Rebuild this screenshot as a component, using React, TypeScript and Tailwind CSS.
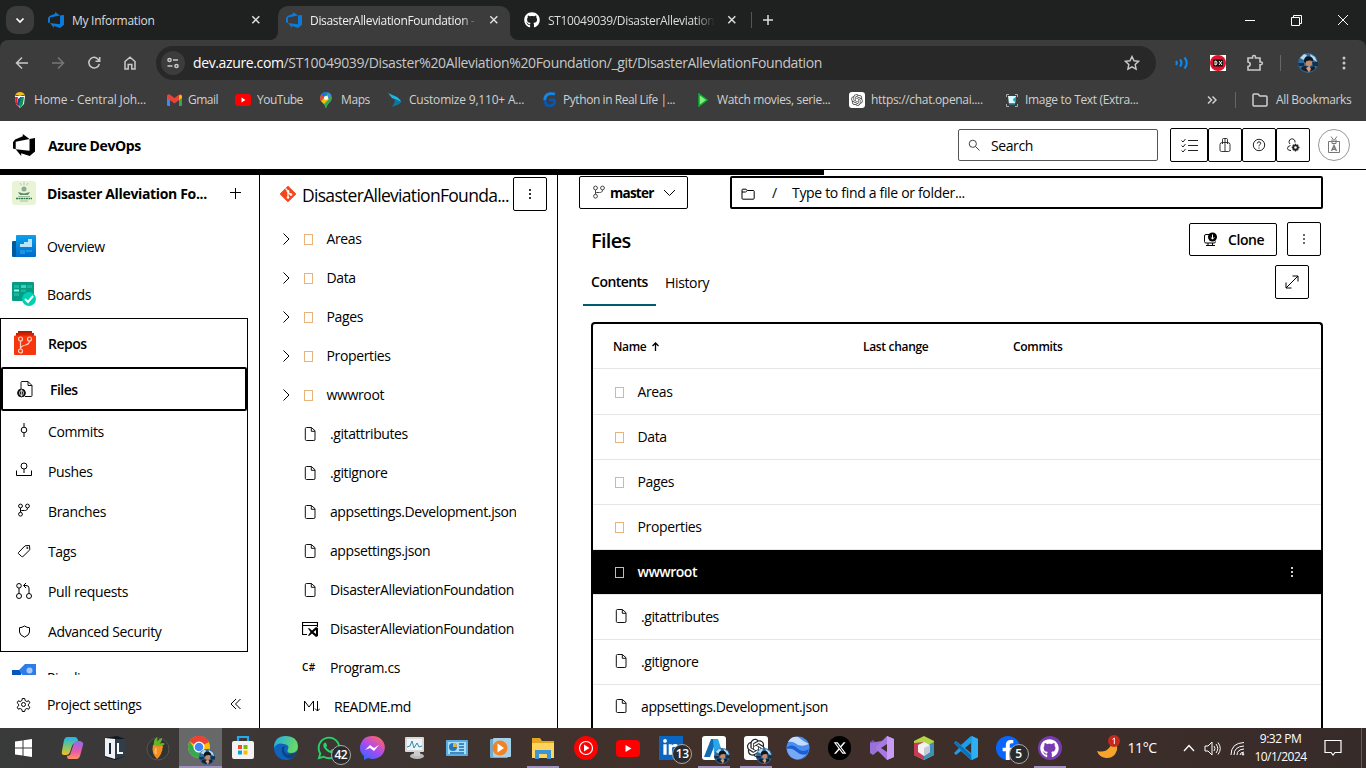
import React from 'react';
import { FaGithub, FaWhatsapp, FaFacebookF, FaLinkedinIn } from 'react-icons/fa';
import { FaXTwitter } from 'react-icons/fa6';
import { RiOpenaiFill } from 'react-icons/ri';

type Kids = { children?: React.ReactNode };

function Ico({ s = 16, vb, c = '', sw = 1, children }: Kids & { s?: number; vb?: number; c?: string; sw?: number }) {
  const v = vb ?? s;
  return (
    <svg width={s} height={s} viewBox={`0 0 ${v} ${v}`} fill="none" stroke="currentColor" strokeWidth={sw} className={`shrink-0 ${c}`}>
      {children}
    </svg>
  );
}

/* ---------- shared glyphs ---------- */
const DevOpsLogo = ({ className = '' }: { className?: string }) => (
  <svg viewBox="0 0 24 24" fill="currentColor" className={`shrink-0 ${className}`}>
    <path d="M0 8.877L2.247 5.910l8.405-3.416V.022l7.370 5.393L2.966 8.338v8.225L0 15.707zm24-4.450v14.651l-5.753 4.900-9.303-3.057v3.056l-5.978-7.416 15.057 1.798V5.415z" />
  </svg>
);
const CloseX = () => (
  <Ico s={10} sw={1.5} c="text-[#dedede]"><path d="M1.300 1.300l7 7M8.300 1.300l-7 7" /></Ico>
);
const DotsV = ({ c = '' }: { c?: string }) => (
  <Ico s={14} c={c}><g fill="currentColor" stroke="none"><rect x="6.200" y="2" width="1.600" height="2" /><rect x="6.200" y="6" width="1.600" height="2" /><rect x="6.200" y="10" width="1.600" height="2" /></g></Ico>
);
const FileGlyph = ({ c = '' }: { c?: string }) => (
  <svg width="12" height="14" viewBox="0 0 12 14" fill="none" stroke="#111" className={`shrink-0 ${c}`}>
    <path d="M2.500 .5h4.800L11 3.700v8.300a1.200 1.200 0 0 1-1.200 1.500H2.500A1.200 1.200 0 0 1 1.300 12.300V1.700A1.200 1.200 0 0 1 2.500 .5z" /><path d="M7.300 .5V4.300h3.700" />
  </svg>
);
const Branch = ({ c = '' }: { c?: string }) => (
  <Ico s={14} c={c}><circle cx="3.500" cy="3" r="1.900" /><circle cx="10.500" cy="3" r="1.900" /><circle cx="3.500" cy="11.200" r="1.900" /><path d="M3.500 5v4.200M10.500 5c0 2-1.200 2.500-3 2.500H5c-1 0-1.500.6-1.500 1.500" /></Ico>
);
const Avatar = ({ c = 'w-5 h-5' }: { c?: string }) => (
  <svg viewBox="0 0 20 20" className={`shrink-0 ${c}`}>
    <circle cx="10" cy="10" r="10" fill="#2f6a9c" />
    <path d="M2 5l4-4 3 1-3 5zM12 1l5 3 2 5-6-4z" fill="#b5dbf0" />
    <path d="M0 10h6v3H1zM14 9h6v4h-5z" fill="#173049" />
    <path d="M3 16c0-2 2-3 4-3l5 1 4-1q1 1 1 3a10 10 0 0 1-14 0z" fill="#1a1f2a" />
    <circle cx="10.800" cy="10" r="3.300" fill="#c38a69" />
    <path d="M6 8.500c0-4 2-5 4.500-5s5 1 4.500 4.500l-3-.6-3.500.6-1 2z" fill="#111419" />
    <path d="M8 15l3.500-2 1.500 3-2 3.500z" fill="#d79c7a" />
  </svg>
);

/* ---------- browser chrome ---------- */
function Tabs() {
  return (
    <div className="flex h-10 bg-[#1f2120] text-xs text-[#dcdcdc]">
      <div className="flex w-[278px] items-center pl-1.5">
        <div className="flex h-7 w-7 items-center justify-center rounded-[10px] bg-[#3c3c3c]">
          <Ico s={10} sw={1.700} c="text-white"><path d="M1.500 3.500L5 7l3.500-3.500" /></Ico>
        </div>
        <DevOpsLogo className="ml-[14px] h-4 w-4 text-[#0a7bdc]" />
        <span className="mt-px ml-2 w-[179px] tracking-[-0.28px]">My Information</span>
        <CloseX />
      </div>
      <div className="flex items-end">
        <Corner />
      </div>
      <div className="mt-1.5 flex h-[34px] w-[232px] items-center rounded-t-[10px] bg-[#3c3c3c] pb-1.5 pl-2">
        <DevOpsLogo className="h-4 w-4 text-[#0a7bdc]" />
        <span className="mt-px ml-2 w-[168px] shrink-0 overflow-hidden whitespace-nowrap tracking-[-0.33px] text-[#f0f0f0] [mask-image:linear-gradient(to_right,black_90%,transparent)]">DisasterAlleviationFoundation -</span>
        <span className="ml-[11px]"><CloseX /></span>
      </div>
      <div className="flex items-end">
        <CornerR />
      </div>
      <div className="flex items-center">
        <FaGithub className="ml-[14px] h-4 w-4 text-white" />
        <span className="mt-px ml-2 w-[167px] overflow-hidden whitespace-nowrap tracking-[-0.33px] [mask-image:linear-gradient(to_right,black_88%,transparent)]">ST10049039/DisasterAlleviation</span>
        <span className="ml-3"><CloseX /></span>
        <div className="ml-[14px] h-4 w-px bg-[#555]" />
        <Ico s={12} sw={1.500} c="ml-[10px]"><path d="M6 1v10M1 6h10" /></Ico>
      </div>
      <div className="ml-auto flex items-center text-white">
        <Ico s={10}><path d="M0 5.500h10" /></Ico>
        <Ico s={11} c="ml-9"><path d="M.5 2.500h8v8h-8zM2.500 2.500v-2h8v8h-2" /></Ico>
        <Ico s={12} c="mr-[17px] ml-[35px]"><path d="M1 1l10 10M11 1L1 11" /></Ico>
      </div>
    </div>
  );
}
const Corner = () => <svg width="8" height="8" viewBox="0 0 8 8" className="-ml-2"><path d="M8 0v8H0a8 8 0 0 0 8-8z" fill="#3c3c3c" /></svg>;
const CornerR = () => <svg width="8" height="8" viewBox="0 0 8 8" className="-mr-2"><path d="M0 0v8h8a8 8 0 0 1-8-8z" fill="#3c3c3c" /></svg>;

function Toolbar() {
  return (
    <div className="flex h-[46px] items-center rounded-t-[8px] bg-[#3c3c3c] text-[#c9c9c9]">
      <Ico s={14} sw={1.500} c="ml-[15px]"><path d="M13 7H2M7 1.500L1.500 7 7 12.500" /></Ico>
      <Ico s={14} sw={1.500} c="ml-[22px] text-[#777]"><path d="M1 7h11M7 1.500L12.500 7 7 12.500" /></Ico>
      <Ico s={14} sw={1.500} c="ml-[22px]"><path d="M12 4.500A5.300 5.300 0 1 0 12.300 8M12.700 1v4.200H8.500" /></Ico>
      <Ico s={14} sw={1.500} c="ml-[22px]"><path d="M2 5.500L7 1.300l5 4.200V13H8.800V8.500H5.200V13H2z" /></Ico>
      <div className="ml-[19px] flex h-[34px] w-[1000px] items-center rounded-full bg-[#282828] pl-[5px]">
        <div className="flex h-6 w-6 items-center justify-center rounded-full bg-[#3c3c3c]">
          <Ico s={14} sw={1.500}><circle cx="3.500" cy="4" r="1.600" /><path d="M7 4h5M1.500 10h5" /><circle cx="10.500" cy="10" r="1.600" /></Ico>
        </div>
        <span className="ml-2 text-sm tracking-[-0.37px] text-[#c7c7c7]"><span className="text-white">dev.azure.com</span>/ST10049039/Disaster%20Alleviation%20Foundation/_git/DisasterAlleviationFoundation</span>
        <Ico s={16} sw={1.400} c="mr-4 ml-auto"><path d="M8 1.500l2 4.300 4.600.5-3.400 3.200.9 4.700L8 11.800l-4.100 2.400.9-4.700L1.400 6.300 6 5.800z" /></Ico>
      </div>
      <Ico s={16} sw={2} c="ml-[18px] text-[#0a8bf5]"><path d="M2 6q1.500 2 0 4M6 4.500q3 3.500 0 7M10.500 2.500q4.500 5.500 0 11" /></Ico>
      <svg width="16" height="16" viewBox="0 0 16 16" className="ml-5"><rect width="16" height="16" fill="#fff" /><circle cx="8" cy="8" r="8" fill="#e0132b" /><rect x="3" y="4.500" width="10" height="7" rx="1" fill="#111" /><path d="M5 6v4q2 0 2-2t-2-2M9 6l3 4M12 6L9 10" stroke="#fff" fill="none" /></svg>
      <Ico s={18} sw={1.600} c="ml-[20px]"><path d="M2 4h4.500V3a1.500 1.500 0 0 1 3 0v1H14v4h1a1.300 1.300 0 0 1 0 2.700h-1V16H2v-3.500c2.500 0 3.200-4 0-4.500z" /></Ico>
      <div className="ml-[16px] h-4 w-px bg-[#666]" />
      <Avatar c="ml-[17px] w-5 h-5" />
      <Ico s={16} c="ml-[18px]"><g fill="currentColor" stroke="none"><circle cx="8" cy="3" r="1.500" /><circle cx="8" cy="8" r="1.500" /><circle cx="8" cy="13" r="1.500" /></g></Ico>
    </div>
  );
}

function Bookmark({ w, g, icon, children }: Kids & { w: string; g: string; icon: React.ReactNode }) {
  return <div className={`flex shrink-0 items-center whitespace-nowrap ${w}`}><span className={`flex shrink-0 ${g}`}>{icon}</span>{children}</div>;
}

function Bookmarks() {
  return (
    <div className="flex h-[35px] items-center bg-[#3c3c3c] pb-[7px] pl-3 text-xs tracking-[-0.2px] text-[#d0d0d0]">
      <Bookmark w="w-[155px]" g="w-[22px]" icon={<svg width="15" height="16" viewBox="0 0 15 16"><path d="M3 4h10l-1 8-4 4-4-4z" fill="#fff" /><path d="M3 5l3 0-1 6 3 5-4-4z" fill="#e21b2d" /><path d="M8 5h4l-1 7-3 4-1-3z" fill="#08955a" /><path d="M6 7l3-2-2 9-2-2z" fill="#16498a" /><path d="M3 4q1-4 5-4t5 4l-2-1-3 1-3-1z" fill="#f5bd18" /></svg>}><span className="tracking-[-0.14px]">Home - Central Joh...</span></Bookmark>
      <Bookmark w="w-[68px]" g="w-[21px]" icon={<svg width="15" height="12" viewBox="0 0 15 12"><path d="M0 1.500h3V12H1.200Q0 12 0 11z" fill="#4285f4" /><path d="M12 1.500h3V11q0 1-1 1h-2z" fill="#34a853" /><path d="M0 2q1-3 3.500-1l4 3 4-3Q14-1 15 2v2l-7.500 5.500L0 4z" fill="#ea4335" /><path d="M12 1.500q3-1.500 3 1V4l-3 2z" fill="#fbbc04" /></svg>}><span className="tracking-[-0.5px]">Gmail</span></Bookmark>
      <Bookmark w="w-[85px]" g="w-[22px]" icon={<svg width="16" height="12" viewBox="0 0 16 12"><rect width="16" height="12" rx="3" fill="#f00" /><path d="M6.500 3.500v5L10.500 6z" fill="#fff" /></svg>}><span className="tracking-[-0.5px]">YouTube</span></Bookmark>
      <Bookmark w="w-[68px]" g="w-[21px]" icon={<svg width="12" height="16" viewBox="0 0 12 16"><path d="M6 0a6 6 0 0 1 6 6c0 4-5 5.500-5.500 10h-1C5 11.500 0 10 0 6a6 6 0 0 1 6-6z" fill="#34a853" /><path d="M1 3A6 6 0 0 1 8 .4L3.500 5.500z" fill="#1a73e8" /><path d="M1.200 2.700L4 5 .8 9Q-.8 6 1.200 2.700z" fill="#ea4335" /><path d="M1 9l7-6 1 4-5 5z" fill="#fbbc04" /><path d="M8 .4A6 6 0 0 1 11.400 3L8 7z" fill="#4285f4" /><circle cx="6" cy="6" r="2.100" fill="#fff" /></svg>}><span className="tracking-[-0.4px]">Maps</span></Bookmark>
      <Bookmark w="w-[155px]" g="w-[21px]" icon={<svg width="14" height="16" viewBox="0 0 14 16"><path d="M0 1l9 4q4 3 4 5L4 6z" fill="#19b9ea" /><path d="M13 10q0 2-9 5 3-4 3-8z" fill="#0c779c" /></svg>}>Customize 9,110+ A...</Bookmark>
      <Bookmark w="w-[155px]" g="w-5" icon={<svg width="14" height="16" viewBox="0 0 14 16" fill="none" strokeWidth="2.800"><path d="M12 2Q2 0 1.800 8q1 8 8 5 2-1 2-5" stroke="#0757b5" /><path d="M12 2Q2 0 1.800 8" stroke="#1687de" /><path d="M6 8h6" stroke="#0757b5" /></svg>}><span className="tracking-[-0.43px]">Python in Real Life |...</span></Bookmark>
      <Bookmark w="w-[151px]" g="w-[19px]" icon={<svg width="10" height="14" viewBox="0 0 10 14"><path d="M1 1l8 6-8 6z" fill="#80ed7d" stroke="#0bad33" strokeWidth="1.500" /></svg>}><span className="tracking-[-0.34px]">Watch movies, serie...</span></Bookmark>
      <Bookmark w="w-[157px]" g="w-[22px]" icon={<span className="flex h-4 w-4 items-center justify-center rounded-[3px] bg-white"><RiOpenaiFill className="h-[14px] w-[14px] text-[#444]" /></span>}><span className="tracking-[-0.32px]">https://chat.openai....</span></Bookmark>
      <Bookmark w="w-[201px]" g="w-[19px]" icon={<svg width="12" height="13" viewBox="0 0 12 13"><path d="M.5 3V.5H3M9 .5h2.500V3M.5 10v2.500H3M9 12.500h2.500V10" stroke="#aaa" fill="none" /><path d="M2 2h8l-1 8H3z" fill="#d9f7fc" /><path d="M7 5l3-2v3L8 8zM3 9h6v1.500H3z" fill="#169fce" /></svg>}><span className="tracking-[-0.33px]">Image to Text (Extra...</span></Bookmark>
      <Ico s={10} sw={1.500}><path d="M1 1.500L4.500 5 1 8.500M5.500 1.500L9 5 5.500 8.500" /></Ico>
      <div className="ml-[18px] h-4 w-px bg-[#666]" />
      <Ico s={16} sw={1.500} c="ml-4"><path d="M1 3.200Q1 2 2 2h4l1.800 2H14q1 0 1 1v8q0 1-1 1H2q-1 0-1-1z" /></Ico>
      <span className="ml-2 tracking-[-0.36px] whitespace-nowrap">All Bookmarks</span>
    </div>
  );
}

/* ---------- Azure DevOps header ---------- */
const HeaderBtn = ({ w, children }: Kids & { w: string }) => (
  <div className={`flex h-[34px] items-center justify-center rounded-[2px] border border-black text-[#222] ${w}`}>{children}</div>
);
function AppHeader() {
  return (
    <div className="flex h-12 items-center">
      <DevOpsLogo className="ml-[13px] h-[22px] w-[22px]" />
      <span className="mt-0.5 ml-[13px] text-sm font-bold tracking-[-0.4px]">Azure DevOps</span>
      <div className="ml-auto flex h-8 w-[200px] items-center rounded-[2px] border border-[#555] pl-[9px] text-sm tracking-[-0.4px]">
        <Ico s={12} c="text-[#444]"><circle cx="4.800" cy="4.800" r="3.600" /><path d="M7.500 7.500l4 4" /></Ico>
        <span className="mt-0.5 ml-[11px]">Search</span>
      </div>
      <div className="ml-3 flex">
        <HeaderBtn w="w-[38px]"><Ico s={17}><path d="M7 3.500h10M7 8.500h10M7 13.500h10M.5 3.500L2 5l2.500-3M.5 8.500L2 10l2.500-3M.5 13.500L2 15l2.500-3" /></Ico></HeaderBtn>
        <HeaderBtn w="w-[34px]"><Ico s={14}><path d="M4.500 4.500h5q2.500 0 2.500 2v5.500q0 1.500-1.500 1.500h-7Q2 13.500 2 12V6.500q0-2 2.500-2zM4.500 6V1.500q0-1 1-1h3q1 0 1 1V6M7 .5v13" strokeWidth=".9" /></Ico></HeaderBtn>
        <HeaderBtn w="w-[34px]"><Ico s={14}><circle cx="7" cy="7" r="5.700" /><path d="M5.300 5.500Q5.300 3.800 7 3.800t1.700 1.500q0 1-1 1.500T7 8.300M7 9.500v1.200" /></Ico></HeaderBtn>
        <HeaderBtn w="w-[34px]"><Ico s={14}><path d="M4 6A3 3 0 1 1 9 4.500M4.500 7.500Q1.500 8 1.500 10.500q0 2 3.500 2" /><circle cx="9.500" cy="9.500" r="2.200" strokeWidth="1.800" /><path d="M9.500 5.700v1.300M9.500 12v1.500M5.700 9.500H7M12 9.500h1.500M6.800 6.800l1 1M11.200 11.200l1 1M12.200 6.800l-1 1M6.800 12.200l1-1" strokeWidth="1.400" /></Ico></HeaderBtn>
      </div>
      <div className="mr-4 ml-2 flex h-8 w-8 items-center justify-center rounded-full border border-[#999] text-[#777]">
        <Ico s={18}><path d="M3.500 5.500h11v11h-11zM7 3.500V7.500h4V3.500M6 .5l3 4 3-4" /><path d="M6.500 15L9 9.500l2.500 5.500M7.500 13.300h3" strokeWidth="1.400" /></Ico>
      </div>
    </div>
  );
}

/* ---------- left navigation ---------- */
const NavRow = ({ icon, children }: Kids & { icon: React.ReactNode }) => (
  <div className="flex h-10 items-center pl-[11px]"><span className="flex w-6 shrink-0 justify-center">{icon}</span><span className="mt-0.5 ml-3">{children}</span></div>
);
function Sidebar() {
  return (
    <div className="flex w-[260px] shrink-0 flex-col border-r border-black text-sm tracking-[-0.36px]">
      <div className="flex h-9 shrink-0 items-center pl-3">
        <svg width="24" height="24" viewBox="0 0 24 24"><rect width="24" height="24" rx="3" fill="#e9f4d7" /><circle cx="12" cy="8" r="2.500" fill="#8fa898" /><path d="M12 1v3M8 2l1.500 2.500M16 2l-1.500 2.500" stroke="#a2b8a4" strokeWidth=".7" /><path d="M6 11l6 1.500 6-1.500-2 3H8z" fill="#5d8f70" /><path d="M4 17.500h16" stroke="#317b49" strokeWidth="1.500" strokeDasharray="2 .5" /><path d="M6 15.500h12M8 20h8" stroke="#a5bfa1" /></svg>
        <span className="mt-0.5 ml-[11px] w-[182px] font-bold tracking-[-0.34px] whitespace-nowrap">Disaster Alleviation Fo...</span>
        <Ico s={13}><path d="M6.500 1v11M1 5.500h11" /></Ico>
      </div>
      <div className="h-3 shrink-0" />
      <div className="flex h-12 shrink-0 items-center pl-3">
        <svg width="24" height="22" viewBox="0 0 24 22" className="-mt-0.5"><defs><linearGradient id="ov" x2="0" y2="1"><stop stopColor="#0aa0ed" /><stop offset="1" stopColor="#006ccb" /></linearGradient></defs><path d="M0 7q0-1 1-1h6v16H1q-1 0-1-1z" fill="#005a9e" /><path d="M4 1q0-1 1-1h18q1 0 1 1v20q0 1-1 1H3q1-1 1-2z" fill="url(#ov)" /><path d="M8 9h4V7h4V4h4v8H8z" fill="#b9e4fb" /><path d="M8 15h5v4H8zM14 15h6v2h-6z" fill="#1c94e2" /></svg>
        <span className="ml-[11px]">Overview</span>
      </div>
      <div className="flex h-12 shrink-0 items-center pl-3">
        <svg width="24" height="24" viewBox="0 0 24 24" className="-mt-0.5"><rect width="22" height="19" rx="1" fill="#069b84" /><path d="M2 3h5v3H2zM15 3h5v3h-5zM2 11h5v3H2zM9 7.500h5v2.500H9z" fill="#16b79d" /><path d="M9 3h5v3H9z" fill="#3ad6bb" /><path d="M2 7.500h5v2H2z" fill="#87ffe4" /><circle cx="17" cy="17" r="7" fill="#00d0b2" /><path d="M13 17l3 3 5-6" stroke="#fff" strokeWidth="2" fill="none" /></svg>
        <span className="ml-[11px]">Boards</span>
      </div>
      <div className="-mt-px h-[334px] w-[248px] shrink-0 border border-black">
        <div className="flex h-12 items-center pl-[13px]">
          <svg width="22" height="24" viewBox="0 0 22 24"><path d="M4 0h14v4H4z" fill="#b81b02" /><path d="M2 2h18v5H2z" fill="#d42200" /><rect y="4.500" width="22" height="19.500" rx="1" fill="#f8360e" /><g stroke="#ffd0c4" fill="none" strokeWidth="1.200"><circle cx="6.500" cy="8" r="2" /><circle cx="15.500" cy="8" r="2" /><circle cx="6.500" cy="20" r="2" /><path d="M6.500 10v8M15.500 10q0 3-4 4-4.500 1-5 3.500" /></g></svg>
          <span className="mt-0.5 ml-3 font-semibold tracking-[-0.5px]">Repos</span>
        </div>
        <div className="flex h-11 items-center rounded-[2px] border-2 border-black pl-[14px]">
          <svg width="17" height="17" viewBox="0 0 17 17" fill="none" stroke="#111"><path d="M4 8V1.500Q4 .5 5 .5h6l4 4v10q0 1-1 1H8M11 .5V4.500h4" /><circle cx="4.500" cy="12" r="3.900" fill="#111" /><ellipse cx="4.500" cy="12" rx="2" ry="2.500" stroke="#fff" strokeWidth=".7" /><path d="M4.500 8.500v7" stroke="#fff" strokeWidth=".7" /></svg>
          <span className="mt-0.5 ml-4 font-semibold tracking-[-0.5px]">Files</span>
        </div>
        <NavRow icon={<Ico s={14} c="-mt-0.5"><circle cx="7" cy="7" r="2.800" /><path d="M7 0v4M7 10v4" /></Ico>}>Commits</NavRow>
        <NavRow icon={<Ico s={16} c="-mt-0.5"><circle cx="8" cy="4" r="3" /><path d="M8 7v4M.5 8.500v5h15v-5" /></Ico>}>Pushes</NavRow>
        <NavRow icon={<Branch c="-mt-0.5" />}>Branches</NavRow>
        <NavRow icon={<Ico s={14}><path d="M1.500 8.500L8 1.800l4.500-.3.300 4.300L6 12.500q-.7.500-1.300 0L1.500 9.700q-.5-.6 0-1.200z" /><circle cx="10.300" cy="4" r=".6" /></Ico>}>Tags</NavRow>
        <NavRow icon={<Ico s={18}><circle cx="4" cy="3.800" r="2.300" /><circle cx="4" cy="14" r="2.500" /><circle cx="14" cy="14" r="2.500" /><path d="M4 6v5.500M14 11.500V6q0-2.500-3-2.500H9M11 1L8.500 3.500 11 6" /></Ico>}>Pull requests</NavRow>
        <NavRow icon={<Ico s={13}><path d="M6.500 1Q9 2.700 11.500 2.700V7q0 3-5 5.200Q1.500 10 1.500 7V2.700Q4 2.700 6.500 1z" /></Ico>}>Advanced Security</NavRow>
      </div>
      <div className="flex h-[23px] shrink-0 items-start overflow-hidden pt-3 pl-3">
        <svg width="24" height="22" viewBox="0 0 24 22" className="shrink-0"><path d="M0 6h9v14H1q-1 0-1-1z" fill="#0557bd" /><path d="M7 6l6-6h11v12l-8 8z" fill="#2b7de9" /><circle cx="17.500" cy="6.500" r="3" fill="#aac8f5" /></svg>
        <span className="mt-1 ml-[11px]">Pipelines</span>
      </div>
      <div className="flex h-[53px] shrink-0 items-center pt-[7px] pl-4">
        <Ico s={15} c="-mt-0.5"><circle cx="7.500" cy="7.500" r="2" /><path d="M6.300 1.500h2.400l.4 2 1.700 1 1.900-.7 1.200 2-1.500 1.400v1.700l1.500 1.300-1.200 2-2-.7-1.600 1-.4 2H6.300l-.4-2-1.700-1-1.900.7-1.200-2 1.500-1.300V7.200L1.100 5.800l1.200-2 1.900.7 1.700-1z" /></Ico>
        <span className="ml-4 w-[183px]">Project settings</span>
        <Ico s={12} c="-mt-0.5"><path d="M6 1L1 6l5 5M10.500 1l-5 5 5 5" /></Ico>
      </div>
    </div>
  );
}

/* ---------- repository tree ---------- */
const FolderBox = ({ c = '' }: { c?: string }) => <span className={`h-[11px] w-[9px] shrink-0 border border-[#e8b47c] ${c}`} />;
const treeFolders = ['Areas', 'Data', 'Pages', 'Properties', 'wwwroot'];
const treeFiles = ['.gitattributes', '.gitignore', 'appsettings.Development.json', 'appsettings.json', 'DisasterAlleviationFoundation'];
function Tree() {
  const row = 'flex h-[39px] shrink-0 items-center';
  return (
    <div className="flex w-[298px] shrink-0 flex-col border-r border-black text-sm tracking-[-0.36px]">
      <div className="flex h-11 shrink-0 items-start pt-0.5 pl-[19px]">
        <svg width="18" height="18" viewBox="0 0 18 18" className="mt-2"><path d="M9 1.200L16.800 9 9 16.800 1.200 9z" fill="#f4461c" stroke="#f4461c" strokeLinejoin="round" /><path d="M6.500 3.500L9 6v6.500M9 7l3 3" stroke="#fff" fill="none" strokeWidth="1.200" /><circle cx="9" cy="6.300" r="1.300" fill="#fff" /><circle cx="9" cy="12.500" r="1.300" fill="#fff" /><circle cx="12" cy="9.500" r="1.300" fill="#fff" /></svg>
        <span className="mt-[5px] ml-[5px] w-[211px] text-[17.500px] leading-[26px] tracking-[-0.7px] whitespace-nowrap">DisasterAlleviationFounda...</span>
        <div className="flex h-[34px] w-[34px] items-center justify-center rounded-[2px] border border-black"><DotsV /></div>
      </div>
      {treeFolders.map((f) => (
        <div key={f} className={row}>
          <Ico s={12} c="ml-5"><path d="M3.500 .5L9 6l-5.500 5.500" /></Ico>
          <span className="ml-3 flex"><FolderBox c="mt-0.5" /></span>
          <span className="mt-px ml-[13.500px]">{f}</span>
        </div>
      ))}
      {treeFiles.map((f) => (
        <div key={f} className={`${row} pl-11`}>
          <FileGlyph /><span className="mt-px ml-[14px] w-[186px] overflow-hidden tracking-[-0.41px] whitespace-nowrap">{f}</span>
        </div>
      ))}
      <div className={`${row} pl-[42px]`}>
        <svg width="16" height="16" viewBox="0 0 16 16" fill="none" stroke="#000"><path d="M5 13.500H.5V1.500h15V6M.5 4.500h15" strokeWidth="1.200" /><path d="M6 7.500l1-.5 3 2.500L14 6l2 1v8l-2 1-4-3.500L7 15l-1-.5L8.500 11zM14 9l-2.500 2 2.500 2z" fill="#000" stroke="none" fillRule="evenodd" /></svg>
        <span className="mt-px ml-3 w-[186px] overflow-hidden tracking-[-0.41px] whitespace-nowrap">DisasterAlleviationFoundation</span>
      </div>
      <div className={`${row} pl-[42px]`}><span className="w-4 text-[10px] font-semibold tracking-[0.3px]">C#</span><span className="mt-px ml-3">Program.cs</span></div>
      <div className={`${row} pl-[43px]`}><Ico s={17}><path d="M1.500 13V3l4.500 6 4.500-6v10M14.500 3v10M12 10.500l2.500 2.500 2.500-2.500" /></Ico><span className="mt-px ml-[14px] tracking-[-0.45px]">README.md</span></div>
    </div>
  );
}

/* ---------- main file listing ---------- */
type RowT = { n: string; file?: boolean; on?: boolean };
const rows: RowT[] = [{ n: 'Areas' }, { n: 'Data' }, { n: 'Pages' }, { n: 'Properties' }, { n: 'wwwroot', on: true }, { n: '.gitattributes', file: true }, { n: '.gitignore', file: true }, { n: 'appsettings.Development.json', file: true }];
function Main() {
  return (
    <div className="flex flex-1 flex-col overflow-hidden text-sm tracking-[-0.36px]">
      <div className="flex h-[34px] shrink-0 items-start pt-px pl-[21px]">
        <div className="flex h-[33px] w-[109px] items-center rounded-[2px] border border-black pl-3">
          <Branch c="-mt-0.5 text-[#444]" /><span className="mt-0.5 ml-1 w-[53px] text-[13.500px] font-bold tracking-[-0.75px]">master</span>
          <Ico s={13}><path d="M1 4l5.500 5.500L12 4" /></Ico>
        </div>
        <div className="ml-[42px] flex h-[33px] w-[593px] items-center rounded-[2px] border-2 border-black pl-[9px]">
          <Ico s={14} c="mt-0.5"><path d="M1 3q0-.8.8-.8H5l1.300 1.300h6q.9 0 .9.900v7q0 .8-.9.800H1.800Q1 12.200 1 11.400zM1 5h3.500L6.300 3.500" /></Ico>
          <span className="mt-px ml-[17px] w-5">/</span>
          <span className="mt-px tracking-[-0.32px]">Type to find a file or folder...</span>
        </div>
      </div>
      <div className="mt-[13px] flex h-[34px] shrink-0 items-center pl-[33px]">
        <span className="mt-1 text-xl font-semibold tracking-[-0.7px]">Files</span>
        <div className="mt-px ml-auto flex h-[33px] w-[88px] items-center rounded-[2px] border border-black pl-[13px] font-semibold">
          <Ico s={15}><path d="M6 2.500H3Q1.500 2.500 1.500 4v5.500q0 1.500 1.500 1.500h8q1.500 0 1.500-1.500M5 11v2.500M9.500 11v2.500M3 13.500h9" /><circle cx="9.500" cy="5" r="4.500" fill="#000" stroke="none" /><path d="M9.500 2.500v4.500M7.700 5.300l1.800 1.800 1.800-1.800" stroke="#fff" /></Ico>
          <span className="mt-px ml-[10px] tracking-[-0.45px]">Clone</span>
        </div>
        <div className="mr-[45px] ml-[10px] flex h-[34px] w-[34px] items-center justify-center rounded-[2px] border border-black"><DotsV c="text-[#444]" /></div>
      </div>
      <div className="flex h-[50px] shrink-0 items-stretch pl-[25px]">
        <div className="flex w-[73px] items-center justify-center border-b-2 border-[#005b70] pt-1 font-semibold tracking-[-0.55px]">Contents</div>
        <div className="ml-[9px] flex items-center pt-1">History</div>
        <div className="mt-[9px] mr-[57px] ml-auto flex h-[34px] w-[34px] items-center justify-center rounded-[2px] border border-black">
          <Ico s={14}><path d="M1 13L13 1M7.500 1H13v5.500M1 7.500V13h5.500" /></Ico>
        </div>
      </div>
      <div className="mt-4 ml-[33px] w-[732px] flex-1 overflow-hidden rounded-t-[4px] border-x-2 border-t-2 border-black">
        <div className="flex h-[45px] items-center border-b border-[#e6e6e6] pt-0.5 pl-5 text-xs font-semibold tracking-[-0.32px]">
          <span className="flex w-[250px] items-center">Name<Ico s={9} sw={1.300} c="-mt-0.5 ml-[5px]"><path d="M4.500 9V1M1.500 4l3-3 3 3" /></Ico></span>
          <span className="w-[150px]">Last change</span>
          <span>Commits</span>
        </div>
        {rows.map((r, i) => (
          <div key={r.n} className={`flex items-center border-b border-[#e6e6e6] pl-[22px] ${i === 0 ? 'h-[46px]' : 'h-[45px]'} ${r.on ? 'bg-black font-semibold tracking-[-0.5px] text-white' : ''}`}>
            {r.file ? <FileGlyph c="-mt-0.5" /> : <FolderBox c="mt-px" />}
            <span className={r.file ? 'ml-[14px] tracking-[-0.4px]' : 'ml-[13.500px]'}>{r.n}</span>
            {r.on && <DotsV c="mr-[22px] ml-auto" />}
          </div>
        ))}
      </div>
    </div>
  );
}

/* ---------- taskbar ---------- */
const Cell = ({ w = 'w-[42.8px]', on, hot, children }: Kids & { w?: string; on?: boolean; hot?: boolean }) => (
  <div className={`flex h-10 shrink-0 items-center justify-center ${w} ${hot ? 'bg-[#67686a]' : ''}`}>
    <div className={`flex h-full items-center justify-center border-b-2 pt-0.5 ${hot ? 'w-full' : 'w-8'} ${on || hot ? 'border-[#9d8fbe]' : 'border-transparent'}`}>{children}</div>
  </div>
);
const Num = ({ children }: Kids) => <span className="absolute -right-[9px] -bottom-1 flex h-5 w-5 items-center justify-center rounded-full border border-[#aaa] bg-[#2b2b2b] text-xs leading-none font-semibold tracking-[-0.5px] text-white">{children}</span>;
const Art = ({ children }: Kids) => <svg width="26" height="26" viewBox="0 0 26 26">{children}</svg>;

function Taskbar() {
  const n = 'w-[42px]';
  return (
    <div className="flex h-10 items-center bg-linear-to-r from-[#393a3b] via-[#42302a] to-[#372b29] text-white">
      <div className="flex w-[50.600px] justify-center pr-[3px]"><svg width="17" height="18" viewBox="0 0 17 18" fill="#fff"><path d="M0 2.500L7.500 1.500v7H0zM8.500 1.300L17 0v8.500H8.500zM0 9.500h7.500v7L0 15.500zM8.500 9.500H17V18l-8.500-1.300z" /></svg></div>
      <Cell><Art><defs><linearGradient id="cp1" x2="0" y2="1"><stop stopColor="#1bb5ec" /><stop offset=".6" stopColor="#8ac763" /><stop offset="1" stopColor="#f8bc26" /></linearGradient><linearGradient id="cp2" x2="0" y2="1"><stop stopColor="#8f6bee" /><stop offset=".6" stopColor="#ec5aa7" /><stop offset="1" stopColor="#ff945c" /></linearGradient></defs><path d="M8 2h8q2 0 3 3l1 3h-4q-2 0-3 3l-2 6q-1 3-4 3H5q-3 0-2-4L5 5q1-3 3-3z" fill="url(#cp1)" /><path d="M18 24h-8q-2 0-2-3l3-1 4-12q1-2 4-2h2q4 1 3 4l-3 11q-1 3-3 3z" fill="url(#cp2)" /></Art></Cell>
      <Cell><Art><path d="M3 3l12-2 8 3v17l-10 4-10-3z" fill="#10171e" /><path d="M3 3l10 1v20L3 21z" fill="#eef2f6" /><path d="M13 4l10 0v17l-10 3z" fill="#303e4c" /><path d="M8 8v11" stroke="#182634" strokeWidth="2" /><path d="M16 8v10h5" stroke="#fff" strokeWidth="2" fill="none" /></Art></Cell>
      <Cell><Art><circle cx="13" cy="14" r="11" fill="#303432" stroke="#555" /><path d="M8 10q5-4 10 1-1 9-6 13-6-6-4-14z" fill="#f68b1f" /><path d="M9 10q-1-5 3-8 1 4 0 6 1-4 5-5 0 4-3 6 4-2 6 0-5 4-11 1z" fill="#62b729" /><path d="M11 13q-1 3 0 6" stroke="#ffc066" strokeWidth="2" /></Art></Cell>
      <Cell hot>
        <div className="relative"><Art><circle cx="12" cy="12" r="11" fill="#fbbc05" /><path d="M12 12L2.500 6.500A11 11 0 0 1 22 7z" fill="#ea4335" /><path d="M2.500 6.500A11 11 0 0 0 12 23l3-8-7-1z" fill="#34a853" /><circle cx="12" cy="12" r="5.500" fill="#fff" /><circle cx="12" cy="12" r="4.300" fill="#4285f4" /></Art><Avatar c="absolute -right-0.5 -bottom-1 h-4 w-4" /></div>
      </Cell>
      <Cell><Art><path d="M8 7V2h10v5" fill="none" stroke="#27a9e9" strokeWidth="2.200" /><rect x="2" y="6" width="22" height="18" rx="2" fill="#f3f3f3" /><path d="M8 10h4v4H8z" fill="#f25022" /><path d="M13.500 10h4v4h-4z" fill="#7fba00" /><path d="M8 15.500h4v4H8z" fill="#00a4ef" /><path d="M13.500 15.500h4v4h-4z" fill="#ffb900" /></Art></Cell>
      <Cell><Art><defs><linearGradient id="eg" x2="1" y2=".3"><stop stopColor="#22a8e8" /><stop offset="1" stopColor="#65dc65" /></linearGradient></defs><circle cx="13" cy="13" r="12" fill="#0f63ba" /><path d="M1 13Q1 1 13 1q11 0 12 10 0 7-7 7-5 0-3-4 2-4-4-5Q4 7 1 13z" fill="url(#eg)" /><path d="M9 12q-2 9 7 11.500 5 0 8-6-8 5-12 0-2-3 0-6z" fill="#0a438d" /><path d="M12 14q1 5 6 5 4 0 7-3v2q-3 2-7 2-5-1-6-6z" fill="#393a3b" /></Art></Cell>
      <Cell><div className="relative"><FaWhatsapp className="h-[26px] w-[26px] text-[#25d366]" /><Num>42</Num></div></Cell>
      <Cell><Art><defs><linearGradient id="ms" y2="0" x1="0" x2=".7" y1="1"><stop stopColor="#176fff" /><stop offset=".55" stopColor="#a74af5" /><stop offset="1" stopColor="#ff6072" /></linearGradient></defs><path d="M13 1a12 11.500 0 1 1-4 22l-4 2v-4A12 11.500 0 0 1 13 1z" fill="url(#ms)" /><path d="M6 15l5-5 4 3 5-3-5 6-4-3z" fill="#fff" /></Art></Cell>
      <Cell><Art><rect x="4" y="2" width="19" height="15" rx="1" fill="#d8d9d9" /><rect x="6" y="4" width="15" height="11" fill="#eef4f7" /><path d="M6 12l3-1 2-5 2 7 3-5 2 4 3-1" stroke="#3a89a8" fill="none" /><ellipse cx="16" cy="21" rx="7" ry="3" fill="#bbb" /><path d="M13 16h6v5h-6z" fill="#ccc" /></Art></Cell>
      <Cell><Art><rect x="2" y="5" width="22" height="16" rx="1" fill="#58aee4" /><rect x="4" y="7" width="18" height="12" fill="#a9ddf8" /><circle cx="9" cy="12" r="4" fill="#2178ba" /><path d="M9 12V8a4 4 0 0 1 4 4z" fill="#f3aa39" /><path d="M15 9h5M15 12h5M15 15h5M6 18h14" stroke="#1c6fa6" strokeWidth="1.500" /></Art></Cell>
      <Cell><Art><rect x="3" y="4" width="18" height="19" rx="1" fill="#70abd0" /><rect x="6" y="3" width="18" height="19" rx="1" fill="#a7d1e8" /><circle cx="13" cy="13" r="7.500" fill="#f38322" /><path d="M10.500 8.500v9l6.500-4.500z" fill="#fff" /></Art></Cell>
      <Cell on><Art><path d="M2 3h8l2 3h12v17H2z" fill="#e4a51f" /><path d="M2 8h22v15H2z" fill="#ffd45d" /><path d="M5 24v-9h16v9h-4v-5H9v5z" fill="#3c96d5" /></Art></Cell>
      <Cell><Art><circle cx="13" cy="13" r="12" fill="#f00" /><circle cx="13" cy="13" r="6.500" fill="none" stroke="#fff" strokeWidth="1.200" /><path d="M11 9.500v7l5.500-3.500z" fill="#fff" /></Art></Cell>
      <Cell><Art><rect x="1" y="5" width="24" height="17" rx="4" fill="#f00" /><path d="M10.500 10v7l6-3.500z" fill="#fff" /></Art></Cell>
      <Cell><div className="relative flex h-6 w-6 items-center justify-center bg-[#0a66c2]"><FaLinkedinIn className="h-[18px] w-[18px]" /><Num>13</Num></div></Cell>
      <Cell w={n} on><div className="relative flex h-6 w-6 items-center justify-center rounded-[3px] bg-white"><svg width="22" height="22" viewBox="0 0 22 22"><path d="M8 2h6L7 20H1z" fill="#126bb5" /><path d="M10 2h5l6 18h-5l-5-4z" fill="#28a8ea" /></svg><Avatar c="absolute -right-1 -bottom-1 h-4 w-4" /></div></Cell>
      <Cell w={n} on><div className="relative flex h-6 w-6 items-center justify-center rounded-[3px] bg-white"><RiOpenaiFill className="h-[22px] w-[22px] text-[#222]" /><Avatar c="absolute -right-1 -bottom-1 h-4 w-4" /></div></Cell>
      <Cell w={n}><Art><circle cx="13" cy="13" r="11.500" fill="#4a8df0" /><path d="M3 7q3-6 10-5 6 5 11 7-9 4-14-1-4-2-7-1z" fill="#c3dcff" /><path d="M2 12q6-4 11 2 5 4 11 0-2 9-10 10.500Q3 23 2 12z" fill="#1c5ed3" /><path d="M2 14q5-2 10 3 4 4 10 2-8 9-16 3-4-4-4-8z" fill="#75a9f6" /></Art></Cell>
      <Cell w={n}><div className="flex h-6 w-[23px] items-center justify-center rounded-full bg-black"><FaXTwitter className="h-[14px] w-[14px]" /></div></Cell>
      <Cell w={n}><Art><path d="M1 7l3-2 14 12v4L1 9z" fill="#7650b8" /><path d="M1 8v10l3 2L18 9V5z" fill="#9a72d7" /><path d="M18 1l7 3v18l-7 3L7 14v-2z" fill="#a779e3" /><path d="M18 9v8l-6-4z" fill="#3f2e29" /><path d="M18 1l7 3v18l-7 3z" fill="#c89bf5" /></Art></Cell>
      <Cell w={n}><Art><path d="M13 1l10 5v14l-10 5-10-5V6z" fill="#b2d742" /><path d="M13 7v18L3 20V8z" fill="#c83b54" /><path d="M13 12l10-5v13l-10 5z" fill="#3c90ba" /><path d="M7 10l6-3 6 3v7l-6 4-6-4z" fill="#f2f2f2" /><path d="M13 13v8l6-4v-7z" fill="#c8ccd0" /></Art></Cell>
      <Cell w={n}><Art><path d="M18 1l7 3v18l-7 3L8 16l-5 4-2-2 5-5-5-5 2-2 5 4zM18 8l-6 5 6 5z" fill="#219be7" fillRule="evenodd" /><path d="M1 8l2-2 15 14v5z" fill="#0873bd" /><path d="M19 1l6 3v18l-6 3z" fill="#2eaff4" /></Art></Cell>
      <Cell w={n}><div className="relative flex h-6 w-6 items-end justify-center overflow-visible rounded-full bg-[#0866ff]"><FaFacebookF className="h-5 w-5" /><Num>5</Num></div></Cell>
      <Cell w={n} on><div className="flex h-6 w-6 items-center justify-center rounded-full bg-[#783bb0]"><FaGithub className="h-[19px] w-[19px]" /></div></Cell>
      <div className="ml-[25px] flex h-full items-center">
        <svg width="26" height="28" viewBox="0 0 26 28"><path d="M16 5q6 4 5 11-3 9-11 8-7-1-9-7 8 2 12-3 4-4 3-9z" fill="#f7a42b" /><circle cx="18" cy="7" r="6" fill="#c7281d" /><path d="M16.500 5.500L18.300 4v6" stroke="#fff" fill="none" /></svg>
      </div>
      <span className="ml-[6px] w-[55px] text-sm tracking-[-0.45px]">11°C</span>
      <Ico s={12} sw={1.300}><path d="M1 9l5-5.500L11 9" /></Ico>
      <Ico s={17} c="ml-[9px]"><path d="M1 6h3l4-4v13l-4-4H1zM10 6q2 2.500 0 5M12 4q3.500 4.500 0 9M14 2.500q4.500 6 0 12" /></Ico>
      <Ico s={15} c="ml-[9px]"><path d="M1 14Q1 2 14 1.500M4 14Q4 5.500 14 5M7 14Q7 8.500 14 8M10 14q0-2.500 4-3" /><circle cx="13" cy="13.300" r=".8" fill="#fff" /></Ico>
      <div className="ml-[4px] w-[64px] text-center text-xs leading-[18px] tracking-[-0.5px] whitespace-nowrap"><div>9:32 PM</div><div>10/1/2024</div></div>
      <Ico s={18} sw={1.200} c="ml-[11px]"><path d="M1 1.500h16v12H11l-2 2.500-2-2.500H1z" /></Ico>
      <div className="ml-auto h-full w-[5px] border-l border-[#665954]" />
    </div>
  );
}

export default function App() {
  return (
    <div className="flex h-[768px] w-[1366px] flex-col overflow-hidden bg-white font-['Open_Sans','Noto_Sans',sans-serif] text-black">
      <Tabs />
      <div className="bg-[#1f2120]"><Toolbar /></div>
      <Bookmarks />
      <AppHeader />
      <div className="h-1.5 shrink-0 border-t border-black"><div className="h-[5px] w-[824px] bg-black" /></div>
      <div className="flex h-[553px] shrink-0 overflow-hidden">
        <Sidebar />
        <Tree />
        <Main />
      </div>
      <Taskbar />
    </div>
  );
}
